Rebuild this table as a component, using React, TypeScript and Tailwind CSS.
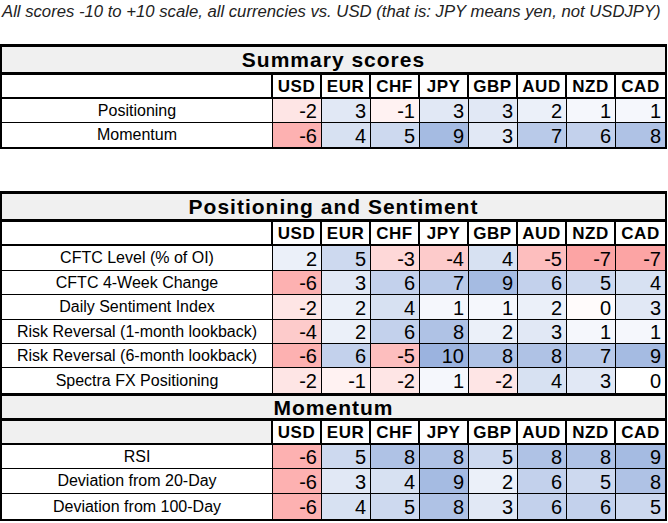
import React from "react";

const CUR = ["USD", "EUR", "CHF", "JPY", "GBP", "AUD", "NZD", "CAD"];

type Row = { label: string; values: number[]; h: number };

function bg(v: number): string {
  const t = Math.min(Math.abs(v) / 10, 1);
  let r: number, g: number, b: number;
  if (v >= 0) {
    r = 255 - t * 100;
    g = 255 - t * 76;
    b = 255 - t * 32;
  } else {
    r = 255 - t * 4;
    g = 255 - t * 130;
    b = 255 - t * 130;
  }
  return `rgb(${Math.round(r)},${Math.round(g)},${Math.round(b)})`;
}

const FONT = { fontFamily: "'Liberation Sans', Arial, sans-serif" };

function TitleRow({ title, top }: { title: string; top?: boolean }) {
  return (
    <div
      className={
        "h-[28px] bg-[#f0f0f0] border-b-[3px] border-black flex items-center justify-center text-[21px] font-bold tracking-[1px] leading-none text-black " +
        (top ? "border-t-[3px]" : "")
      }
    >
      {title}
    </div>
  );
}

function HeaderRow({ grayLabel }: { grayLabel?: boolean }) {
  return (
    <div className="grid grid-cols-[271px_repeat(8,49px)] h-[24px] border-b-2 border-black">
      <div className={"border-r-2 border-black " + (grayLabel ? "bg-[#f0f0f0]" : "bg-white")} />
      {CUR.map((c, i) => (
        <div
          key={c}
          className={
            "flex items-center justify-center text-[17px] font-bold tracking-[0.5px] leading-none bg-white " +
            (i < 7 ? "border-r-2 border-black" : "")
          }
        >
          {c}
        </div>
      ))}
    </div>
  );
}

function DataRow({ row, last }: { row: Row; last?: boolean }) {
  return (
    <div
      className={"grid grid-cols-[271px_repeat(8,49px)] " + (last ? "" : "border-b border-black")}
      style={{ height: row.h }}
    >
      <div className="border-r border-black flex items-center justify-center text-[16px] leading-none bg-white">
        {row.label}
      </div>
      {row.values.map((v, i) => (
        <div
          key={i}
          className={
            "flex items-center justify-end pr-[4px] pt-[1px] text-[20px] leading-none " +
            (i < 7 ? "border-r border-black" : "")
          }
          style={{ backgroundColor: bg(v) }}
        >
          {String(Math.round(v))}
        </div>
      ))}
    </div>
  );
}

const summary: Row[] = [
  { label: "Positioning", values: [-2, 3, -1, 3, 3, 2, 1, 1], h: 24 },
  { label: "Momentum", values: [-6, 4, 5, 9, 3, 7, 6, 8], h: 24 },
];

const positioning: Row[] = [
  { label: "CFTC Level (% of OI)", values: [2, 5, -3, -4, 4, -5, -7, -7], h: 25 },
  { label: "CFTC 4-Week Change", values: [-6, 3, 6, 7, 9, 6, 5, 4], h: 24 },
  { label: "Daily Sentiment Index", values: [-2, 2, 4, 1, 1, 2, -0.3, 3], h: 25 },
  { label: "Risk Reversal (1-month lookback)", values: [-4, 2, 6, 8, 2, 3, 1, 1], h: 24 },
  { label: "Risk Reversal (6-month lookback)", values: [-6, 6, -5, 10, 8, 8, 7, 9], h: 24 },
  { label: "Spectra FX Positioning", values: [-2, -1, -2, 1, -2, 4, 3, 0], h: 25 },
];

const momentum: Row[] = [
  { label: "RSI", values: [-6, 5, 8, 8, 5, 8, 8, 9], h: 24 },
  { label: "Deviation from 20-Day", values: [-6, 3, 4, 9, 2, 6, 5, 8], h: 25 },
  { label: "Deviation from 100-Day", values: [-6, 4, 5, 8, 3, 6, 6, 5], h: 25 },
];

export default function App() {
  return (
    <div className="w-[668px] h-[523px] bg-white text-black overflow-hidden" style={FONT}>
      <div className="h-[44px] pl-[2px] pt-[3px] text-[16.7px] italic leading-[18px] text-[#222] whitespace-nowrap">
        All scores -10 to +10 scale, all currencies vs. USD (that is: JPY means yen, not USDJPY)
      </div>
      <div className="w-[667px] border-x-2 border-t-[3px] border-b-2 border-black">
        <TitleRow title="Summary scores" />
        <HeaderRow />
        {summary.map((r, i) => (
          <DataRow key={r.label} row={r} last={i === summary.length - 1} />
        ))}
      </div>
      <div className="h-[42px]" />
      <div className="w-[667px] border-x-2 border-t-[3px] border-b-2 border-black">
        <TitleRow title="Positioning and Sentiment" />
        <HeaderRow />
        {positioning.map((r, i) => (
          <DataRow key={r.label} row={r} last={i === positioning.length - 1} />
        ))}
        <TitleRow title="Momentum" top />
        <HeaderRow grayLabel />
        {momentum.map((r, i) => (
          <DataRow key={r.label} row={r} last={i === momentum.length - 1} />
        ))}
      </div>
    </div>
  );
}
